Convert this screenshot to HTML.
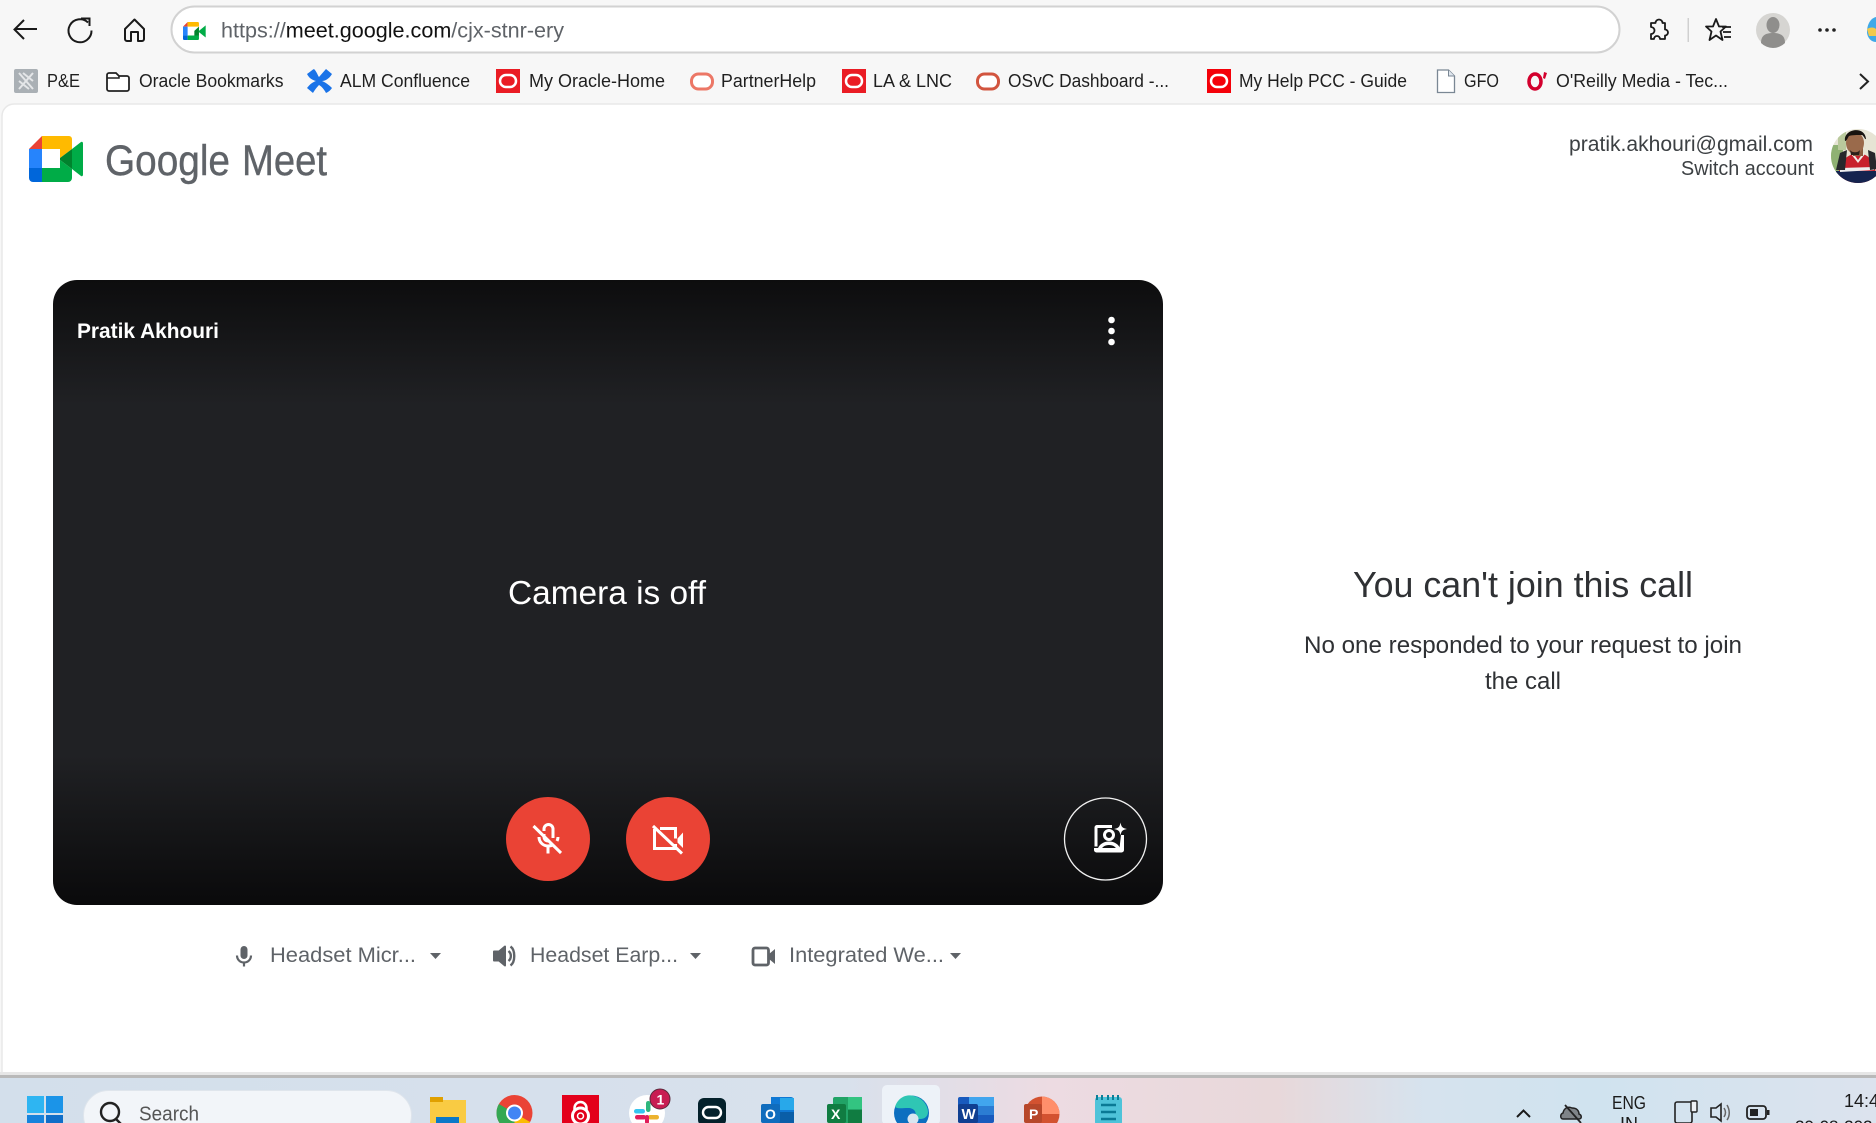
<!DOCTYPE html>
<html lang="en">
<head>
<meta charset="utf-8">
<title>Google Meet</title>
<style>
html,body{margin:0;padding:0;width:1876px;height:1123px;overflow:hidden;background:#f7f7f7}
svg{display:block}
text{font-family:"Liberation Sans",sans-serif}
.bm{font-size:18px;fill:#1f1f1f}
.dev{font-size:21px;fill:#5f6368}
</style>
</head>
<body>
<svg xmlns="http://www.w3.org/2000/svg" width="1876" height="1123" viewBox="0 0 1876 1123">
<defs>
<linearGradient id="card" x1="0" y1="0" x2="0" y2="1">
<stop offset="0" stop-color="#0d0d0e"/><stop offset=".2" stop-color="#202124"/><stop offset=".76" stop-color="#202124"/><stop offset="1" stop-color="#0a0a0b"/>
</linearGradient>
<linearGradient id="tb" x1="0" y1="0" x2="1" y2="0">
<stop offset="0" stop-color="#d3dfeb"/><stop offset=".45" stop-color="#d8e1ec"/><stop offset=".56" stop-color="#eddbe2"/><stop offset=".68" stop-color="#e8d8da"/><stop offset=".76" stop-color="#d6e3ee"/><stop offset=".85" stop-color="#d0e3ef"/><stop offset="1" stop-color="#dce3ee"/>
</linearGradient>
<clipPath id="av"><circle cx="1858" cy="156" r="27"/></clipPath>
</defs>

<!-- browser chrome -->
<rect width="1876" height="104" fill="#f7f7f7"/>
<path d="M37 29H15M24 20l-9.500 9.500 9.500 9.500" fill="none" stroke="#1a1a1a" stroke-width="2"/>
<path d="M88 22.500a11.500 11.500 0 1 0 3.500 8" fill="none" stroke="#1a1a1a" stroke-width="2"/><path d="M81 18.500h8.500v7.500" fill="none" stroke="#1a1a1a" stroke-width="2"/>
<path d="M125 29l9.500-9.500 9.500 9.500v10a2 2 0 0 1-2 2h-4v-9h-7v9h-4a2 2 0 0 1-2-2z" fill="none" stroke="#1a1a1a" stroke-width="2" stroke-linejoin="round"/>
<rect x="171.500" y="6.500" width="1448" height="46" rx="23" fill="#fff" stroke="#d2d2d2" stroke-width="2"/>
<g transform="translate(183 22) scale(.42)">
<path d="M0 11L11 0v11z" fill="#ea4335"/><path d="M0 11h11v21H0z" fill="#2684fc"/><path d="M0 32h11v11H3a3 3 0 0 1-3-3z" fill="#0066da"/>
<path d="M11 0h24a3 3 0 0 1 3 3v8H11z" fill="#ffba00"/><path d="M11 32h27v8a3 3 0 0 1-3 3H11z" fill="#00ac47"/><path d="M38 11v21H27V21z" fill="#00832d"/><path d="M38 21l16-13v29L38 24z" fill="#00ac47"/>
</g>
<text x="221" y="37.500" font-size="21" textLength="343" lengthAdjust="spacingAndGlyphs" fill="#5f6368">https://<tspan fill="#111">meet.google.com</tspan>/cjx-stnr-ery</text>

<path d="M1651 23h4.500a3.500 3.500 0 1 1 7 0h2.500v6.500a3 3 0 1 1 0 6v3.500h-5a3 3 0 1 0-6 0h-3v-5a3.500 3.500 0 1 0 0-7z" fill="none" stroke="#1a1a1a" stroke-width="1.800" stroke-linejoin="round"/>
<rect x="1687.500" y="18" width="1.500" height="24" fill="#d0d0d0"/>
<path d="M1716 19l3 7.500h7l-5.500 5 2 8.500-6.500-4.500-6.500 4.500 2-8.500-5.500-5h7z" fill="none" stroke="#1a1a1a" stroke-width="1.800" stroke-linejoin="round"/>
<path d="M1722 27h9M1723 32h8M1724 37h7" stroke="#1a1a1a" stroke-width="1.800"/>
<circle cx="1773" cy="30" r="17" fill="#d6d5d2"/><ellipse cx="1773" cy="25" rx="6.500" ry="8" fill="#8f8e8c"/><path d="M1761 43c0-8 5-10 12-10s12 2 12 10a17 17 0 0 1-24 0z" fill="#8f8e8c"/>
<circle cx="1820" cy="30" r="1.800" fill="#222"/><circle cx="1827" cy="30" r="1.800" fill="#222"/><circle cx="1834" cy="30" r="1.800" fill="#222"/>
<path d="M1876 17c-5 1-9 7-9 15 0 4 3 10 9 10z" fill="#3fa9e8"/><path d="M1867 29c3-2 7-2 9 0v7h-7z" fill="#f2c94c"/>

<!-- bookmarks -->
<rect x="14" y="69" width="24" height="24" rx="2" fill="#aab0b5"/><path d="M19 73l14 16M33 73L19 89M23 73l10 8M29 89l-10-8" stroke="#e4e6e8" stroke-width="2" fill="none"/>
<text class="bm" x="47" y="87" textLength="33" lengthAdjust="spacingAndGlyphs">P&amp;E</text>
<path d="M107 75a2 2 0 0 1 2-2h7l3 3h8a2 2 0 0 1 2 2v11a2 2 0 0 1-2 2h-18a2 2 0 0 1-2-2z" fill="#fff" stroke="#222" stroke-width="1.800"/><path d="M107 78h12v-2" fill="none" stroke="#222" stroke-width="1.500"/>
<text class="bm" x="139" y="87" textLength="144.500" lengthAdjust="spacingAndGlyphs">Oracle Bookmarks</text>
<path d="M307 74c3-2 5-4 7-5 3 3 4 7 5 8l7-8 6 5c-3 5-7 7-10 7 3 1 7 4 10 7-2 3-4 4-6 5-2-4-5-7-7-8-2 2-5 6-6 8l-6-5c3-4 6-6 9-7-4-1-7-3-9-7z" fill="#1a73e8"/>
<text class="bm" x="340" y="87" textLength="130" lengthAdjust="spacingAndGlyphs">ALM Confluence</text>
<rect x="496" y="69" width="24" height="24" fill="#ea1c24"/><rect x="500" y="75" width="16" height="12" rx="6" fill="#ea1c24" stroke="#fff" stroke-width="2.500"/>
<text class="bm" x="529" y="87" textLength="136" lengthAdjust="spacingAndGlyphs">My Oracle-Home</text>
<rect x="691.500" y="74" width="21" height="15" rx="7" fill="#fff" stroke="#ec7766" stroke-width="3"/>
<text class="bm" x="721" y="87" textLength="95" lengthAdjust="spacingAndGlyphs">PartnerHelp</text>
<rect x="842" y="69" width="24" height="24" fill="#ea1c24"/><rect x="846" y="75" width="16" height="12" rx="6" fill="#ea1c24" stroke="#fff" stroke-width="2.500"/>
<text class="bm" x="873" y="87" textLength="79" lengthAdjust="spacingAndGlyphs">LA &amp; LNC</text>
<rect x="977.500" y="74" width="21" height="15" rx="7" fill="#fff" stroke="#d2553f" stroke-width="3"/>
<text class="bm" x="1008" y="87" textLength="161" lengthAdjust="spacingAndGlyphs">OSvC Dashboard -...</text>
<rect x="1207" y="69" width="24" height="24" fill="#f40009"/><rect x="1211" y="75" width="16" height="12" rx="6" fill="#f40009" stroke="#fff" stroke-width="2.500"/>
<text class="bm" x="1239" y="87" textLength="168" lengthAdjust="spacingAndGlyphs">My Help PCC - Guide</text>
<path d="M1437.500 70h11l6 6v16.500h-17z" fill="#fff" stroke="#7a8794" stroke-width="1.300"/><path d="M1448.500 70v6h6" fill="#dfe6ee" stroke="#7a8794"/>
<text class="bm" x="1464" y="87" textLength="35" lengthAdjust="spacingAndGlyphs">GFO</text>
<ellipse cx="1535" cy="81.500" rx="6" ry="7.500" fill="none" stroke="#d3002d" stroke-width="3.500"/><path d="M1544 72l3 1-2 6-2-1z" fill="#d3002d"/>
<text class="bm" x="1556" y="87" textLength="172" lengthAdjust="spacingAndGlyphs">O'Reilly Media - Tec...</text>
<path d="M1860 74l8 7.500-8 7.500" fill="none" stroke="#222" stroke-width="2"/>

<!-- page -->
<path d="M2 1072V116a12 12 0 0 1 12-12H1876v968z" fill="#fff"/>
<path d="M2 1072V116a12 12 0 0 1 12-12H1876" fill="none" stroke="#e8e8e8" stroke-width="1.500"/>
<rect y="1072" width="1876" height="3" fill="#e6e6e6"/>

<!-- logo -->
<g transform="translate(29 136)">
<path d="M0 13L13 0v13z" fill="#ea4335"/><path d="M0 13h13v19H0z" fill="#2684fc"/><path d="M0 32h13v14H4a4 4 0 0 1-4-4z" fill="#0066da"/>
<path d="M13 0h27a3 3 0 0 1 3 3v10l-12 9V13H13z" fill="#ffba00"/>
<path d="M13 32h18v-8l12 9v9a4 4 0 0 1-4 4H13z" fill="#00ac47"/>
<path d="M31 22l12-9v20l-12-9z" fill="#00832d"/>
<path d="M43 13l9-7c1-.7 2 0 2 1.500v31c0 1.500-1 2.200-2 1.500l-9-7z" fill="#00ac47"/>
</g>
<text x="105" y="175" font-size="43" textLength="125" lengthAdjust="spacingAndGlyphs" fill="#5f6368" stroke="#5f6368" stroke-width=".4">Google</text>
<text x="242" y="175" font-size="43" textLength="85" lengthAdjust="spacingAndGlyphs" fill="#5f6368" stroke="#5f6368" stroke-width=".4">Meet</text>

<!-- account -->
<text x="1569" y="151" font-size="21" textLength="244" lengthAdjust="spacingAndGlyphs" fill="#3c4043">pratik.akhouri@gmail.com</text>
<text x="1681" y="175" font-size="20" textLength="133" lengthAdjust="spacingAndGlyphs" fill="#3c4043">Switch account</text>
<g clip-path="url(#av)">
<rect x="1831" y="129" width="54" height="54" fill="#e6e4d4"/>
<rect x="1831" y="145" width="12" height="30" fill="#8fb173"/>
<rect x="1838" y="132" width="8" height="18" fill="#b9c99c"/>
<path d="M1838 183c0-20 6-28 20-30 12 1 18 10 19 30z" fill="#c8202c"/>
<path d="M1836 171h42v13h-42z" fill="#15244f"/>
<path d="M1840 168l34-1v3l-34 2z" fill="#eee"/>
<path d="M1853 153l5 7 5-7 2 1-7 9-7-9z" fill="#f1e9e4"/>
<path d="M1836 170l4-17 7-3-2 20zM1868 150l7 3 2 16-7 1z" fill="#26282c"/>
<rect x="1853" y="147" width="10" height="9" fill="#8a5a3e"/>
<ellipse cx="1855" cy="143" rx="9" ry="11" fill="#9a6a4b"/>
<path d="M1845 141c-2-12 20-16 21-2-1 1-2-3-4-4-5 0-10 0-13 1-1 1-2 5-4 5z" fill="#17130f"/>
<path d="M1850 150c2 3 8 3 10 0l-1 5h-8z" fill="#2a1f18"/>
</g>

<!-- video card -->
<rect x="53" y="280" width="1110" height="625" rx="24" fill="url(#card)"/>
<text x="77" y="338" font-size="21" font-weight="700" textLength="142" lengthAdjust="spacingAndGlyphs" fill="#fff">Pratik Akhouri</text>
<circle cx="1111.500" cy="320" r="3.300" fill="#fff"/><circle cx="1111.500" cy="331" r="3.300" fill="#fff"/><circle cx="1111.500" cy="342" r="3.300" fill="#fff"/>
<text x="508" y="604" font-size="33" textLength="198" lengthAdjust="spacingAndGlyphs" fill="#fff">Camera is off</text>

<circle cx="548" cy="839" r="42" fill="#ea4335"/>
<g fill="none" stroke="#fff" stroke-width="3">
<path d="M544 831v-2a4.500 4.500 0 0 1 9 0v9"/>
<path d="M539 837c0 5 4 9 9 9 2 0 4-.5 5.500-1.500M558 837c0 1.500-.5 3-1 4"/>
<path d="M548 846v7.500"/>
<path d="M533.500 826l27.500 27"/>
<path d="M544 834v3c0 2 1.500 4 4 4"/>
</g>

<circle cx="668" cy="839" r="42" fill="#ea4335"/>
<g fill="none" stroke="#fff" stroke-width="3">
<path d="M660 828.500h15.500v10M675.500 844v4.500H654.500V829"/>
<path d="M653 826l29 27.500"/>
</g>
<path d="M677.500 838.500l5.500-6v15.500l-5.500-5.500z" fill="#fff"/>

<circle cx="1105.500" cy="839" r="41" fill="none" stroke="#f1f1f1" stroke-width="1.300"/>
<g fill="#fff">
<path d="M1097 825h15v3h-14.500v18.500h-3V827.500a2.500 2.500 0 0 1 2.500-2.500zM1121 835h3v15a2.500 2.500 0 0 1-2.500 2.500h-25a2.500 2.500 0 0 1-2.500-2.500v-2h25.500z"/>
<path d="M1097.500 850c1-5.500 6-8.500 11.500-8.500s10.500 3 11.500 8.500h-3.500c-1-3-4-5-8-5s-7 2-8 5z"/>
<circle cx="1109" cy="835" r="4.500" fill="none" stroke="#fff" stroke-width="3"/>
<path d="M1120.500 822.500c.8 4.500 2 5.700 6.500 6.500-4.500.8-5.700 2-6.500 6.500-.8-4.500-2-5.700-6.500-6.500 4.500-.8 5.700-2 6.500-6.500z"/>
</g>

<!-- device row -->
<rect x="240.500" y="946" width="7" height="13" rx="3.500" fill="#5f6368"/><path d="M237 955.500c0 4 3 7 7 7s7-3 7-7M244 962.500v4" fill="none" stroke="#5f6368" stroke-width="2.200"/>
<text class="dev" x="270" y="962" textLength="146" lengthAdjust="spacingAndGlyphs">Headset Micr...</text>
<path d="M430 953h11l-5.500 6z" fill="#5f6368"/>
<path d="M494 951.500h5l6-5v19l-6-5h-5z" fill="#5f6368" stroke="#5f6368" stroke-width="2" stroke-linejoin="round"/><path d="M508.500 951a6.500 6.500 0 0 1 0 10M510.500 946.500c5 3.500 5 15.500 0 19" fill="none" stroke="#5f6368" stroke-width="2.400"/>
<text class="dev" x="530" y="962" textLength="148" lengthAdjust="spacingAndGlyphs">Headset Earp...</text>
<path d="M690 953h11l-5.500 6z" fill="#5f6368"/>
<rect x="753" y="948" width="15.500" height="17" rx="2" fill="none" stroke="#5f6368" stroke-width="2.800"/><path d="M769 954l6-5v15l-6-5z" fill="#5f6368"/>
<text class="dev" x="789" y="962" textLength="155" lengthAdjust="spacingAndGlyphs">Integrated We...</text>
<path d="M950 953h11l-5.500 6z" fill="#5f6368"/>

<!-- right panel -->
<text x="1353" y="597" font-size="36" textLength="340" lengthAdjust="spacingAndGlyphs" fill="#2f3134">You can't join this call</text>
<text x="1304" y="653" font-size="24" textLength="438" lengthAdjust="spacingAndGlyphs" fill="#2f3134">No one responded to your request to join</text>
<text x="1485" y="689" font-size="24" textLength="76" lengthAdjust="spacingAndGlyphs" fill="#2f3134">the call</text>

<!-- taskbar -->
<rect y="1075" width="1876" height="3" fill="#b9b9b9"/>
<rect y="1078" width="1876" height="45" fill="url(#tb)"/>
<rect x="27" y="1096" width="17" height="17" fill="#2eb5f2"/><rect x="46" y="1096" width="17" height="17" fill="#1b94e8"/><rect x="27" y="1115" width="17" height="9" fill="#1683dc"/><rect x="46" y="1115" width="17" height="9" fill="#0f6ec8"/>
<rect x="83.500" y="1090.500" width="328" height="50" rx="25" fill="#f2f5f9" stroke="#dfe5ec"/>
<circle cx="110" cy="1112" r="9" fill="none" stroke="#222" stroke-width="2.400"/><path d="M116 1119l7 7" stroke="#222" stroke-width="2.400"/>
<text x="139" y="1120.500" font-size="20" textLength="60" lengthAdjust="spacingAndGlyphs" fill="#555">Search</text>

<path d="M430 1097h10l3 3h23v30h-36z" fill="#f9cb43"/><path d="M430 1097h13v5h-13z" fill="#e0a000"/><rect x="436" y="1117" width="23" height="10" fill="#0a78c8"/>
<circle cx="514.500" cy="1113" r="18" fill="#ea4335"/><path d="M514.500 1113l15.600 9a18 18 0 0 1-15.600 9 18 18 0 0 1-15.600-9z" fill="#fbbc04"/><path d="M498.900 1104a18 18 0 0 0 0 18 18 18 0 0 0 15.600 9l0-18z" fill="#34a853"/><circle cx="514.500" cy="1113" r="8.500" fill="#fff"/><circle cx="514.500" cy="1113" r="6.500" fill="#4285f4"/>
<rect x="562" y="1095" width="37" height="28" fill="#e3001b"/><circle cx="580.500" cy="1116" r="8" fill="none" stroke="#fff" stroke-width="3"/><path d="M574.500 1110v-2a6 6 0 0 1 12 0v2" fill="none" stroke="#fff" stroke-width="2.500"/><circle cx="580.500" cy="1116" r="3" fill="none" stroke="#fff" stroke-width="1.500"/>
<circle cx="647" cy="1113" r="18" fill="#fff"/>
<rect x="634" y="1109" width="11" height="4.500" rx="2.200" fill="#36c5f0"/><rect x="646" y="1101" width="4.500" height="11" rx="2.200" fill="#2eb67d"/><rect x="635" y="1115" width="11" height="4.500" rx="2.200" fill="#e01e5a"/><rect x="648" y="1115" width="11" height="4.500" rx="2.200" fill="#ecb22e"/><rect x="645" y="1115" width="4" height="9" rx="2" fill="#e01e5a"/>
<circle cx="660" cy="1099" r="10" fill="#c81d52" stroke="#5a2a3c" stroke-width="1"/><text x="656.500" y="1104.500" font-size="14" font-weight="700" fill="#fff">1</text>
<rect x="698" y="1098" width="28" height="28" rx="6" fill="#04212b"/><rect x="703" y="1107" width="18" height="11" rx="5.500" fill="none" stroke="#fff" stroke-width="2.400"/>
<path d="M771 1097h20a3 3 0 0 1 3 3v23h-23z" fill="#0f78d4"/><rect x="780" y="1098" width="14" height="12" fill="#28a8ea"/><path d="M771 1112h23v11h-23z" fill="#0a5ea8"/><rect x="761" y="1104" width="19" height="19" rx="2" fill="#0f6cbd"/><text x="765" y="1119" font-size="14" font-weight="700" fill="#fff">O</text>
<rect x="833" y="1097" width="29" height="26" rx="2" fill="#21a366"/><rect x="848" y="1097" width="14" height="12" fill="#33c481"/><rect x="848" y="1110" width="14" height="13" fill="#107c41"/><rect x="827" y="1104" width="19" height="19" rx="2" fill="#107c41"/><text x="831" y="1119" font-size="14" font-weight="700" fill="#fff">X</text>
<rect x="882" y="1085" width="58" height="40" rx="5" fill="#edf2f8"/>
<circle cx="911.500" cy="1113" r="17.500" fill="#0c6fc0"/><path d="M895 1107c3-10 12-13 19-11 9 2 14 10 14 16 0 4-3 7-8 7-3 0-5-1-5-3 2-4-1-8-7-8-6 0-10 1-13-1z" fill="#2fc6b4"/><circle cx="913" cy="1119" r="5.500" fill="#d9e6f0"/>
<rect x="958" y="1097" width="36" height="26" rx="2" fill="#185abd"/><rect x="969" y="1097" width="25" height="9" fill="#41a5ee"/><rect x="969" y="1106" width="25" height="9" fill="#2b7cd3"/><rect x="958" y="1104" width="20" height="19" rx="2" fill="#103f91"/><text x="961.500" y="1119" font-size="15" font-weight="700" fill="#fff">W</text>
<circle cx="1042" cy="1114" r="17.500" fill="#d35230"/><path d="M1042 1096.500a17.500 17.500 0 0 1 17.500 17.500H1042z" fill="#ff8f6b"/><rect x="1024" y="1104" width="18" height="19" rx="2" fill="#b7472a"/><text x="1029" y="1119" font-size="14" font-weight="700" fill="#fff">P</text>
<rect x="1095" y="1097" width="27" height="28" rx="3" fill="#4ec3d9"/><path d="M1097 1095v5M1102 1095v5M1108 1095v5M1113 1095v5M1118 1095v5" stroke="#0a7f98" stroke-width="2"/><path d="M1101 1105h15M1101 1112h15M1101 1119h15" stroke="#0a7a95" stroke-width="2.400"/>

<path d="M1517 1117l6.500-6.500 6.500 6.500" fill="none" stroke="#1a1a1a" stroke-width="2"/>
<path d="M1563 1119c-3 0-3-5 0-6 1-5 5-7 9-5 5 0 7 3 7 6 3 1 3 5 0 5z" fill="#7f8488" stroke="#222" stroke-width="1.500"/><path d="M1565 1105l16 18" stroke="#222" stroke-width="1.800"/>
<text x="1612" y="1109" font-size="18" textLength="34" lengthAdjust="spacingAndGlyphs" fill="#1a1a1a">ENG</text>
<text x="1620" y="1130" font-size="18" textLength="18" lengthAdjust="spacingAndGlyphs" fill="#1a1a1a">IN</text>
<rect x="1675" y="1102" width="17" height="21" rx="2" fill="none" stroke="#222" stroke-width="1.600"/><rect x="1691" y="1101" width="6" height="11" rx="1" fill="#eef2f6" stroke="#222" stroke-width="1.400"/>
<path d="M1711 1108h5l5-4v17l-5-4h-5z" fill="none" stroke="#222" stroke-width="1.600"/><path d="M1724 1108c2 3 2 6 0 9M1727 1105c3 5 3 11 0 15" fill="none" stroke="#666" stroke-width="1.500"/>
<rect x="1747" y="1106" width="19" height="13" rx="3" fill="none" stroke="#222" stroke-width="1.800"/><rect x="1750" y="1109" width="8" height="7" fill="#222"/><rect x="1767" y="1110" width="2.500" height="5" fill="#222"/>
<text x="1844" y="1107" font-size="18" fill="#1a1a1a">14:4</text>
<text x="1795" y="1132" font-size="17" fill="#1a1a1a">29-08-202</text>
</svg>
</body>
</html>
